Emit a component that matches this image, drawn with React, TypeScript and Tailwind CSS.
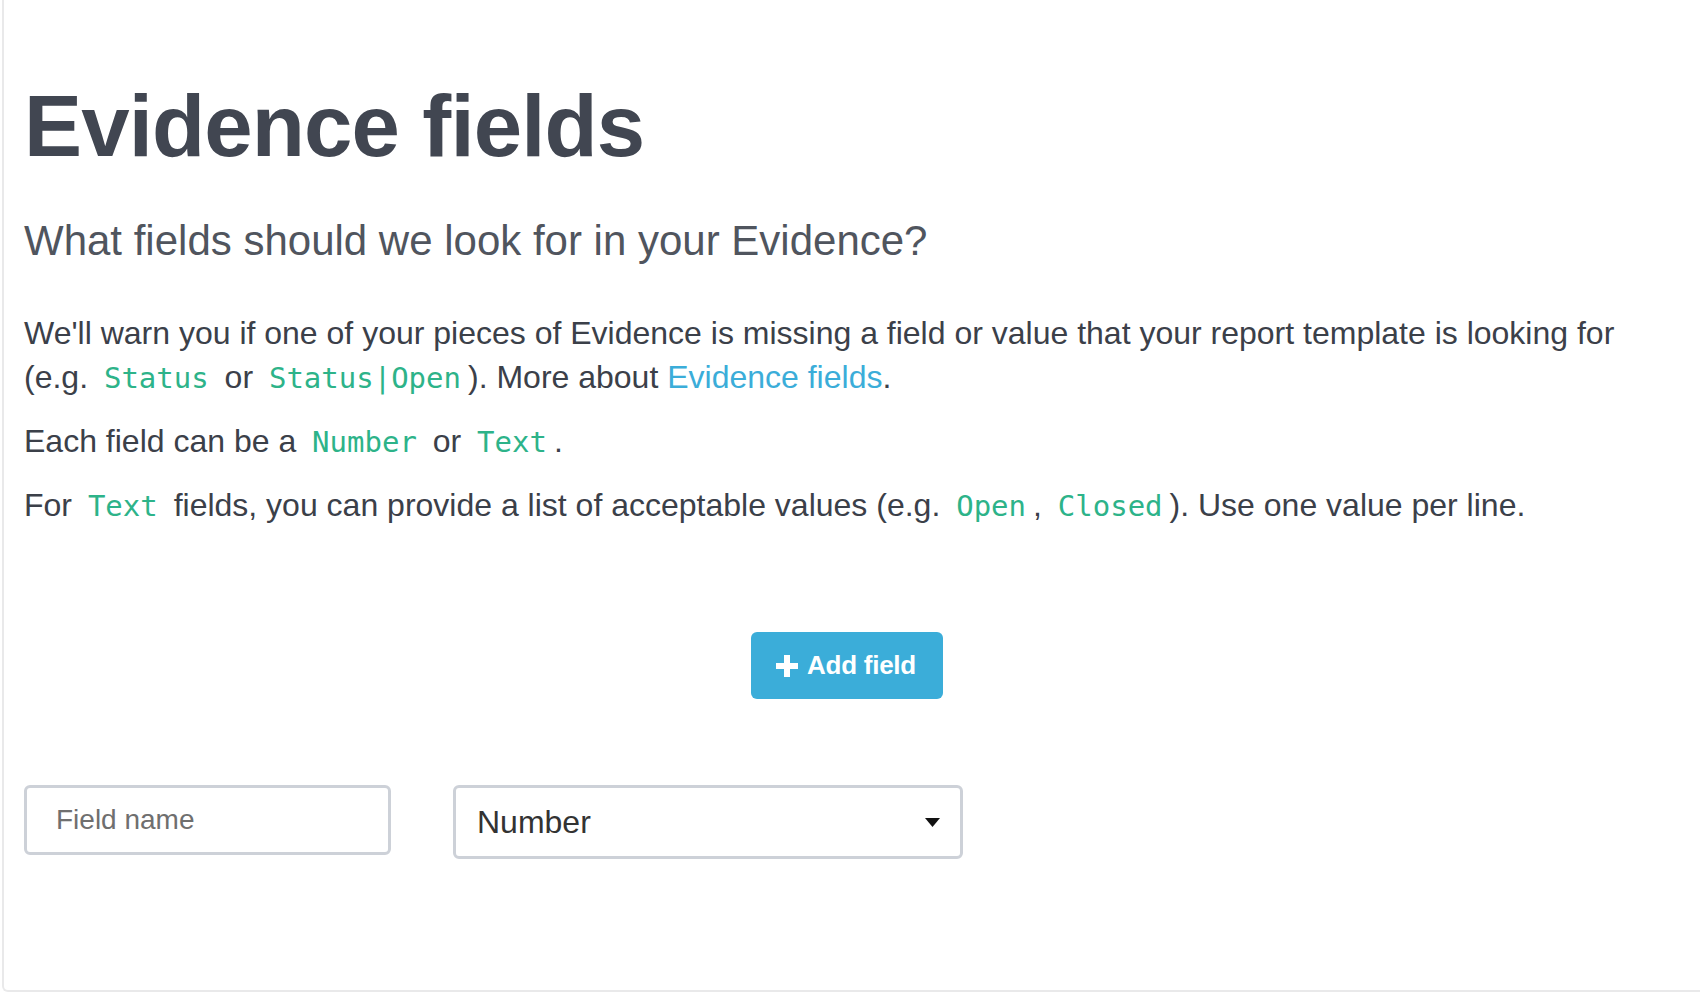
function Code({ children }: { children: React.ReactNode }) {
  return (
    <code className="px-[7px] font-['DejaVu_Sans_Mono',monospace] text-[29px] leading-none text-[#2db389]">
      {children}
    </code>
  );
}

function PlusIcon() {
  return (
    <svg width="22" height="22" viewBox="0 0 22 22" className="shrink-0">
      <path d="M8 0h6v8h8v6h-8v8H8v-8H0V8h8z" fill="white" />
    </svg>
  );
}

export default function App() {
  return (
    <div className="min-h-screen bg-white pl-[2px] font-['Liberation_Sans',Arial,sans-serif]">
      <div className="min-h-[992px] border-l-2 border-b-2 border-[#e9e9ea] rounded-bl-md pl-5 pr-[30px]">
        <h1 className="pt-[76px] text-[87px] font-bold leading-[100px] tracking-[-0.01em] text-[#414651]">
          Evidence fields
        </h1>

        <h2 className="mt-10 text-[42px] font-light leading-[50px] text-[#50555e]">
          What fields should we look for in your Evidence?
        </h2>

        <div className="mt-[45px] text-[32px] leading-[44px] text-[#3b4049]">
          <p>
            We'll warn you if one of your pieces of Evidence is missing a field or value that your
            report template is looking for (e.g. <Code>Status</Code> or <Code>Status|Open</Code>).
            More about <a className="text-[#3badd9]">Evidence fields</a>.
          </p>
          <p className="mt-5">
            Each field can be a <Code>Number</Code> or <Code>Text</Code>.
          </p>
          <p className="mt-5">
            For <Code>Text</Code> fields, you can provide a list of acceptable values (e.g.{" "}
            <Code>Open</Code>, <Code>Closed</Code>). Use one value per line.
          </p>
        </div>

        <div className="mt-[105px] flex justify-center">
          <button className="flex h-[67px] items-center gap-[9px] rounded-md bg-[#3badd9] pl-[25px] pr-[27px] text-[26px] font-bold tracking-[-0.01em] text-white">
            <PlusIcon />
            Add field
          </button>
        </div>

        <div className="mt-[86px] flex items-start gap-[62px]">
          <input
            placeholder="Field name"
            className="h-[70px] w-[367px] rounded-md border-[3px] border-[#cdd1d8] pl-[29px] text-[28px] text-[#333] placeholder:text-[#6f6f6f] outline-none"
          />
          <div className="flex h-[74px] w-[510px] items-center justify-between rounded-md border-[3px] border-[#cdd1d8] pl-[21px] pr-[20px] text-[32px] text-[#333]">
            <span>Number</span>
            <svg width="15" height="9" viewBox="0 0 15 9">
              <path d="M0 0h15L7.5 9z" fill="#111" />
            </svg>
          </div>
        </div>
      </div>
    </div>
  );
}
